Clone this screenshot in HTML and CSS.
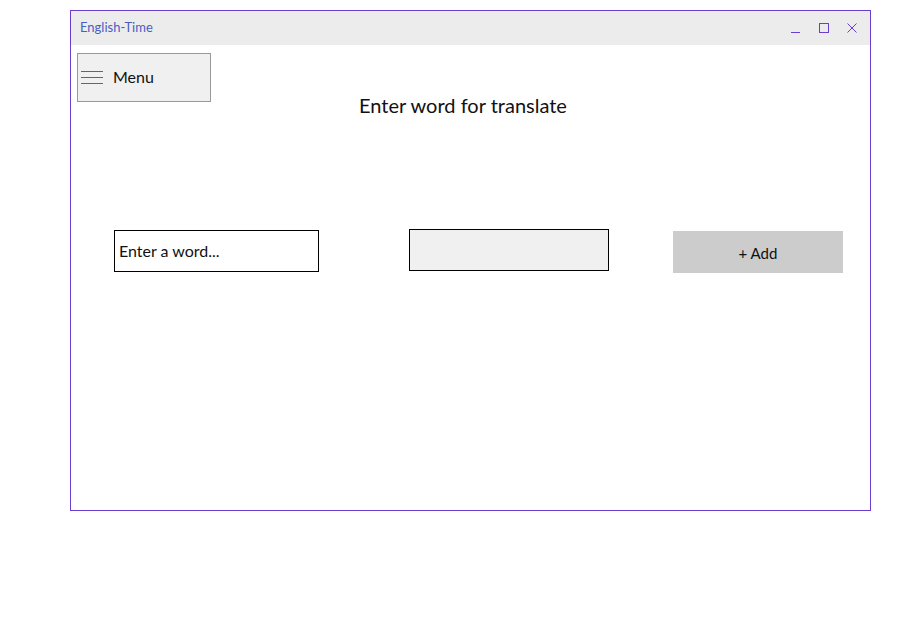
FILE: index.html
```html
<!DOCTYPE html>
<html>
<head>
<meta charset="utf-8">
<link rel="stylesheet" href="styles.css">
</head>
<body>
<div class="window">
  <div class="titlebar">
    <span class="title">English-Time</span>
    <div class="controls">
      <svg class="ctl" width="12" height="12" viewBox="0 0 12 12"><line x1="1" y1="10.5" x2="10" y2="10.5" stroke="#6a3fd0" stroke-width="1"/></svg>
      <svg class="ctl" width="12" height="12" viewBox="0 0 12 12"><rect x="1.5" y="1.5" width="9" height="9" fill="none" stroke="#6a3fd0" stroke-width="1"/></svg>
      <svg class="ctl" width="12" height="12" viewBox="0 0 12 12"><path d="M1.5 1.5 L10.5 10.5 M10.5 1.5 L1.5 10.5" stroke="#6a3fd0" stroke-width="1"/></svg>
    </div>
  </div>
  <div class="content">
    <div class="top">
      <button class="menu">
        <svg width="24" height="16" viewBox="0 0 24 16"><g stroke="#666" stroke-width="1"><line x1="0" y1="2.5" x2="22" y2="2.5"/><line x1="0" y1="8.5" x2="22" y2="8.5"/><line x1="0" y1="14.5" x2="22" y2="14.5"/></g></svg>
        <span>Menu</span>
      </button>
      <h1 class="heading">Enter word for translate</h1>
    </div>
    <div class="row">
      <div class="field field-word">Enter a word...</div>
      <div class="field field-result"></div>
      <button class="add">+ Add</button>
    </div>
  </div>
</div>
</body>
</html>
```

FILE: styles.css
```css
* { box-sizing: border-box; }
html, body { margin: 0; padding: 0; background: #fff; }
body {
  font-family: "Lato", "Open Sans", sans-serif;
  padding: 10px 0 0 70px;
}
.window {
  width: 801px;
  height: 501px;
  border: 1px solid #6a3fd0;
  background: #fff;
}
.titlebar {
  height: 34px;
  background: #ececec;
  display: flex;
  align-items: center;
  justify-content: space-between;
  padding: 0 12px 2px 9px;
}
.title {
  font-size: 13px;
  color: #4a5cc4;
}
.controls {
  display: flex;
  gap: 16px;
  align-items: center;
  margin-top: 2px;
}
.ctl { display: block; }
.top {
  display: flex;
  align-items: flex-start;
}
.menu {
  margin: 8px 0 0 6px;
  width: 134px;
  height: 49px;
  background: #f0f0f0;
  border: 1px solid #999;
  display: flex;
  align-items: center;
  padding: 0 0 2px 3px;
  font-family: inherit;
  font-size: 16px;
  color: #111;
  gap: 8px;
}
.menu svg { display: block; margin-top: 0; }
.heading {
  margin: 47px 0 0 148px;
  font-size: 20px;
  font-weight: normal;
  color: #111;
  line-height: 26px;
}
.row {
  display: flex;
  align-items: flex-start;
  margin-top: 111px;
}
.field {
  height: 42px;
  border: 1px solid #000;
  font-size: 16px;
  display: flex;
  align-items: center;
  padding-left: 4px;
  padding-bottom: 2px;
  color: #111;
}
.field-word {
  width: 205px;
  margin: 1px 0 0 43px;
  background: #fff;
}
.field-result {
  width: 200px;
  margin-left: 90px;
  background: #f0f0f0;
}
.add {
  width: 170px;
  height: 42px;
  margin: 2px 0 0 64px;
  background: #cccccc;
  border: none;
  font-family: inherit;
  font-size: 15px;
  color: #111;
  padding-top: 2px;
}
```
